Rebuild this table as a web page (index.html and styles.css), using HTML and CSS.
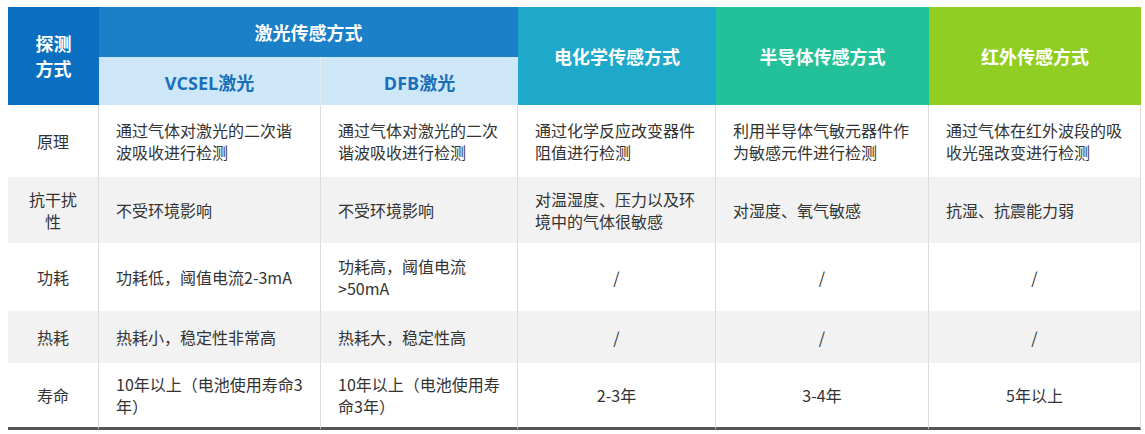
FILE: index.html
```html
<!DOCTYPE html>
<html lang="zh-CN">
<head>
<meta charset="utf-8">
<title>传感方式对比</title>
<link rel="stylesheet" href="styles.css">
</head>
<body>
<table class="cmp">
  <colgroup>
    <col class="c-label">
    <col class="c-vcsel">
    <col class="c-dfb">
    <col class="c-echem">
    <col class="c-semi">
    <col class="c-ir">
  </colgroup>
  <thead>
    <tr class="h-top">
      <th rowspan="2" class="h-label">探测<br>方式</th>
      <th colspan="2" class="h-laser">激光传感方式</th>
      <th rowspan="2" class="h-echem">电化学传感方式</th>
      <th rowspan="2" class="h-semi">半导体传感方式</th>
      <th rowspan="2" class="h-ir">红外传感方式</th>
    </tr>
    <tr class="h-sub">
      <th class="h-subcell h-vcsel"><span class="lat">VCSEL</span>激光</th>
      <th class="h-subcell"><span class="lat">DFB</span>激光</th>
    </tr>
  </thead>
  <tbody>
    <tr class="r-1">
      <td class="lbl">原理</td>
      <td>通过气体对激光的二次谐波吸收进行检测</td>
      <td>通过气体对激光的二次谐波吸收进行检测</td>
      <td>通过化学反应改变器件阻值进行检测</td>
      <td>利用半导体气敏元器件作为敏感元件进行检测</td>
      <td>通过气体在红外波段的吸收光强改变进行检测</td>
    </tr>
    <tr class="r-2 alt">
      <td class="lbl">抗干扰<br>性</td>
      <td>不受环境影响</td>
      <td>不受环境影响</td>
      <td>对温湿度、压力以及环境中的气体很敏感</td>
      <td>对湿度、氧气敏感</td>
      <td>抗湿、抗震能力弱</td>
    </tr>
    <tr class="r-3">
      <td class="lbl">功耗</td>
      <td>功耗低，阈值电流2-3mA</td>
      <td>功耗高，阈值电流&gt;50mA</td>
      <td class="mid">/</td>
      <td class="mid">/</td>
      <td class="mid">/</td>
    </tr>
    <tr class="r-4 alt">
      <td class="lbl">热耗</td>
      <td>热耗小，稳定性非常高</td>
      <td>热耗大，稳定性高</td>
      <td class="mid">/</td>
      <td class="mid">/</td>
      <td class="mid">/</td>
    </tr>
    <tr class="r-5">
      <td class="lbl">寿命</td>
      <td>10年以上（电池使用寿命3年）</td>
      <td>10年以上（电池使用寿命3年）</td>
      <td class="mid">2-3年</td>
      <td class="mid">3-4年</td>
      <td class="mid">5年以上</td>
    </tr>
  </tbody>
</table>
</body>
</html>
```

FILE: styles.css
```css
html, body {
  background: #ffffff;
}
body {
  margin: 7px 0 0 8px;
  font-family: "Noto Sans CJK SC", "Noto Sans", sans-serif;
  color: #333333;
}
.cmp {
  width: 1133px;
  table-layout: fixed;
  border-collapse: separate;
  border-spacing: 0;
  font-size: 16px;
  line-height: 22px;
}
.c-label { width: 91px; }
.c-vcsel { width: 222px; }
.c-dfb { width: 197px; }
.c-echem { width: 198px; }
.c-semi { width: 213px; }
.c-ir { width: 212px; }

.cmp th {
  padding: 0;
  font-weight: 700;
  font-size: 18px;
  line-height: 25px;
  color: #ffffff;
  text-align: center;
  vertical-align: middle;
}
.h-top { height: 50px; }
.h-sub { height: 48px; }
.h-label { background: #0a6fc0; }
.h-laser { background: #1b80c8; }
.h-echem { background: #1ea8c9; }
.h-semi { background: #23c199; }
.h-ir { background: #91ce23; }
.cmp th.h-subcell {
  background: #cde7f8;
  color: #1a6fb9;
  font-size: 18px;
  padding-top: 3px;
}
.h-vcsel { border-right: 1px solid #e2edf5; }
.lat {
  font-family: "Open Sans", "Noto Sans", sans-serif;
  font-weight: 700;
  font-size: 18px;
}

.cmp td {
  padding: 0 14px 0 17px;
  vertical-align: middle;
  text-align: left;
  border-right: 1px solid #dcdcdc;
}
.cmp td.lbl {
  padding: 0;
  text-align: center;
}
.cmp td.mid {
  padding: 0;
  text-align: center;
}
.alt td { background: #f2f2f2; }

.r-1 { height: 72px; }
.r-2 { height: 66px; }
.r-3 { height: 68px; }
.r-4 { height: 52px; }
.r-5 { height: 67px; }
.r-5 td { border-bottom: 3px solid #555555; }
```
